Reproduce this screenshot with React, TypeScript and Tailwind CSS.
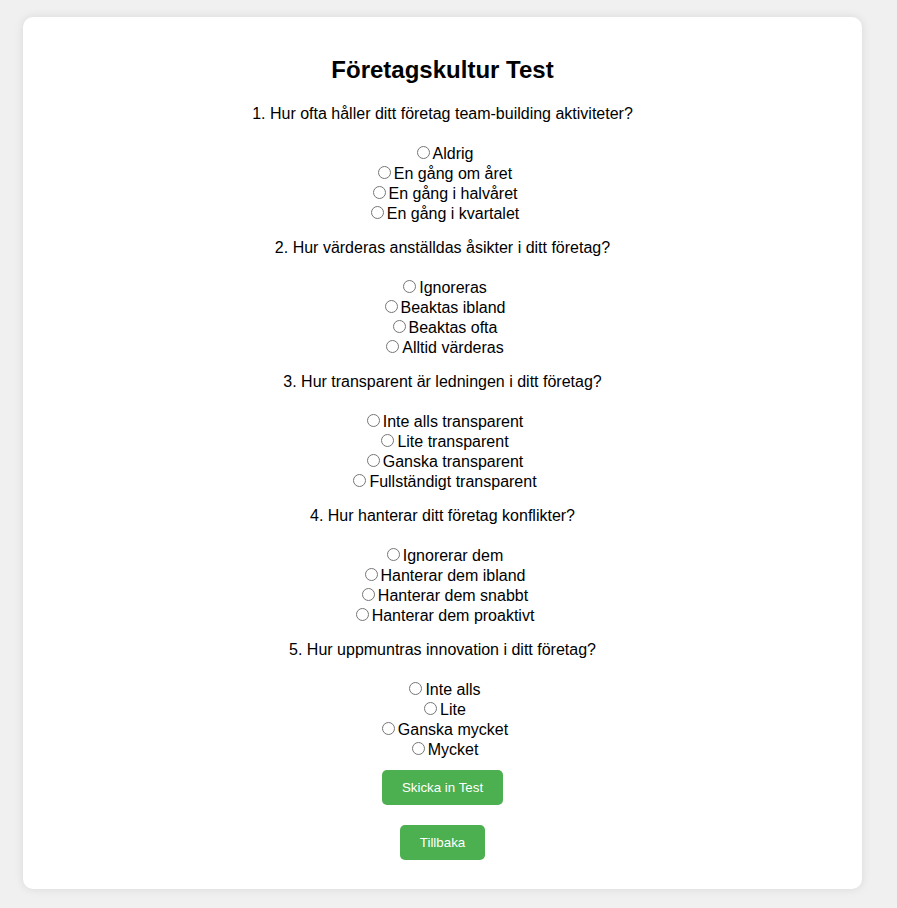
const questions = [
  {
    text: "1. Hur ofta håller ditt företag team-building aktiviteter?",
    options: ["Aldrig", "En gång om året", "En gång i halvåret", "En gång i kvartalet"],
  },
  {
    text: "2. Hur värderas anställdas åsikter i ditt företag?",
    options: ["Ignoreras", "Beaktas ibland", "Beaktas ofta", "Alltid värderas"],
  },
  {
    text: "3. Hur transparent är ledningen i ditt företag?",
    options: ["Inte alls transparent", "Lite transparent", "Ganska transparent", "Fullständigt transparent"],
  },
  {
    text: "4. Hur hanterar ditt företag konflikter?",
    options: ["Ignorerar dem", "Hanterar dem ibland", "Hanterar dem snabbt", "Hanterar dem proaktivt"],
  },
  {
    text: "5. Hur uppmuntras innovation i ditt företag?",
    options: ["Inte alls", "Lite", "Ganska mycket", "Mycket"],
  },
];

export default function App() {
  return (
    <div className="min-h-[908px] bg-[#f0f0f0] pt-[17px] pb-[20px] font-['Liberation_Sans',Arial,sans-serif] text-black">
      <div className="ml-[23px] w-[839px] rounded-[10px] bg-white shadow-[0_0_10px_rgba(0,0,0,0.1)] pt-[39px] pb-[29px] text-center">
        <h1 className="text-[24px] leading-[28px] font-bold">Företagskultur Test</h1>

        <form className="mt-[20px] flex flex-col items-center">
          {questions.map((q, qi) => (
            <div key={qi} className={qi > 0 ? "mt-[14px] w-full" : "w-full"}>
              <p className="text-[16px] leading-[20px] mb-[20px]">{q.text}</p>
              {q.options.map((opt, oi) => (
                <label key={oi} className="block h-[20px] text-[16px] leading-[20px]">
                  <input
                    type="radio"
                    name={`q${qi + 1}`}
                    value={oi}
                    className="ml-[5px] mr-[3px] mt-[2px] w-[13px] h-[13px]"
                  />
                  {opt}
                </label>
              ))}
            </div>
          ))}

          <button
            type="button"
            className="mt-[10px] bg-[#4CAF50] text-white text-[13.33px] leading-[15px] px-[20px] py-[10px] rounded-[5px]"
          >
            Skicka in Test
          </button>
          <button
            type="button"
            className="mt-[20px] bg-[#4CAF50] text-white text-[13.33px] leading-[15px] px-[20px] py-[10px] rounded-[5px]"
          >
            Tillbaka
          </button>
        </form>
      </div>
    </div>
  );
}
